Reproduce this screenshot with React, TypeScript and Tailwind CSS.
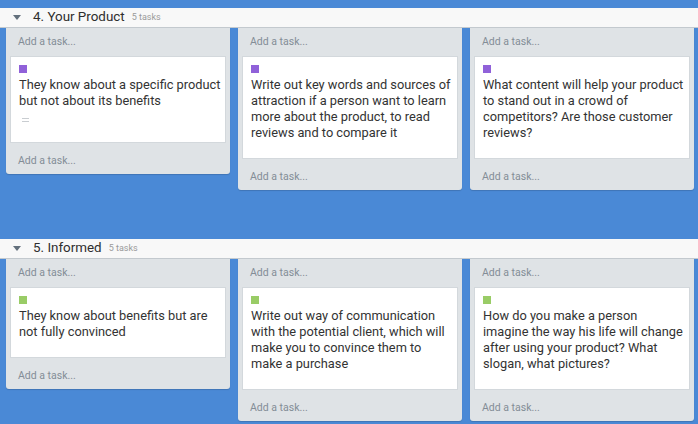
const purple = 'bg-[#9061d9]';
const green = 'bg-[#99cc66]';

type Task = { text: string; desc?: boolean };

const sections: { title: string; color: string; tasks: Task[] }[] = [
  {
    title: '4. Your Product',
    color: purple,
    tasks: [
      { text: 'They know about a specific product but not about its benefits', desc: true },
      { text: 'Write out key words and sources of attraction if a person want to learn more about the product, to read reviews and to compare it' },
      { text: 'What content will help your product to stand out in a crowd of competitors? Are those customer reviews?' },
    ],
  },
  {
    title: '5. Informed',
    color: green,
    tasks: [
      { text: 'They know about benefits but are not fully convinced' },
      { text: 'Write out way of communication with the potential client, which will make you to convince them to make a purchase' },
      { text: 'How do you make a person imagine the way his life will change after using your product? What slogan, what pictures?' },
    ],
  },
];

function AddTask({ className }: { className: string }) {
  return (
    <div className={`px-[8px] text-[10.5px] leading-[14px] text-[#838d96] ${className}`}>
      Add a task...
    </div>
  );
}

function Column({ task, color }: { task: Task; color: string }) {
  return (
    <div className="w-[224px] rounded-b-[3px] bg-[#dfe3e6] px-[4px] shadow-[0_1px_1px_rgba(0,0,0,0.15)]">
      <AddTask className="pt-[7px] pb-[7px]" />
      <div className="border border-[#d3d8dc] bg-white pt-[8px] pb-[17px] pl-[8px] pr-[4px]">
        <div className={`h-[8px] w-[8px] ${color}`} />
        <p className="mt-[4px] text-[12.8px] leading-[16px] text-[#333333]">{task.text}</p>
        {task.desc && (
          <div className="mt-[8px] flex h-[8px] w-[8px] flex-col gap-[2px] pl-[3px] pt-[1px]">
            <div className="h-px w-[7px] bg-[#c9cdd1]" />
            <div className="h-px w-[7px] bg-[#c9cdd1]" />
          </div>
        )}
      </div>
      <AddTask className="pt-[11px] pb-[6px]" />
    </div>
  );
}

export default function App() {
  return (
    <div
      className="h-[424px] w-[698px] overflow-hidden bg-[#4a89d6] pt-[8px]"
      style={{ fontFamily: 'Roboto, "Liberation Sans", sans-serif' }}
    >
      {sections.map((s, i) => (
        <div key={s.title} className={i > 0 ? 'mt-[49px]' : ''}>
          <div className="flex h-[20px] items-center border-b border-[#c3c9ce] bg-[#f8f8f8]">
            <svg width="8" height="5" viewBox="0 0 8 5" className="ml-[13px]">
              <path d="M0 0 L8 0 L4 5 Z" fill="#63707c" />
            </svg>
            <span className="ml-[12px] text-[13.4px] text-[#2e2e2e]">{s.title}</span>
            <span className="ml-[7px] text-[9px] text-[#9a9a9a]">5 tasks</span>
          </div>
          <div className="flex items-start gap-[8px] pl-[6px]">
            {s.tasks.map((t) => (
              <Column key={t.text} task={t} color={s.color} />
            ))}
          </div>
        </div>
      ))}
    </div>
  );
}
